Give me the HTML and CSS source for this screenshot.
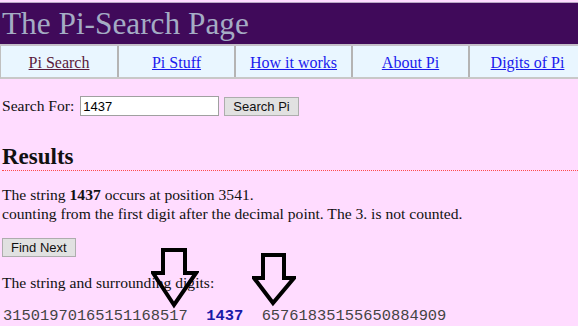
FILE: index.html
```html
<!DOCTYPE html>
<html lang="en">
<head>
    <meta charset="UTF-8">
    <title>The Pi-Search Page</title>
    <link rel="stylesheet" href="styles.css">
</head>
<body>
    <div class="masthead">The Pi-Search Page</div>
    <div class="nav">
        <a class="nav-item visited" href="#">Pi Search</a>
        <a class="nav-item" href="#">Pi Stuff</a>
        <a class="nav-item" href="#">How it works</a>
        <a class="nav-item" href="#">About Pi</a>
        <a class="nav-item" href="#">Digits of Pi</a>
    </div>

    <form class="search" onsubmit="return false">
        <label for="q">Search For:</label>
        <input id="q" type="text" value="1437">
        <button type="submit">Search Pi</button>
    </form>

    <h2 class="results-title">Results</h2>

    <p class="result">
        The string <b>1437</b> occurs at position 3541.<br>
        counting from the first digit after the decimal point. The 3. is not counted.
    </p>

    <button class="find-next" type="button">Find Next</button>

    <p class="surround-label">The string and surrounding digits:</p>
    <div class="digits">31501970165151168517&nbsp;&nbsp;<b>1437</b>&nbsp;&nbsp;65761835155650884909</div>

    <!-- markers drawn over the page -->
    <svg class="arrow arrow-one" width="48" height="62" viewBox="0 0 48 62">
        <path d="M12 2 H34 V25 H45 L23 57 L2 25 H12 Z" fill="none" stroke="#000" stroke-width="4" stroke-linejoin="miter"/>
    </svg>
    <svg class="arrow arrow-two" width="44" height="54" viewBox="0 0 44 54">
        <path d="M11 2 H32 V25 H42 L21 50 L2 25 H11 Z" fill="none" stroke="#000" stroke-width="4" stroke-linejoin="miter"/>
    </svg>
</body>
</html>
```

FILE: styles.css
```css
body {
    margin: 0;
    background: #ffdcff;
    font-family: 'Liberation Serif', 'Times New Roman', serif;
    font-size: 15.6px;
    color: #111;
    position: relative;
    min-height: 326px;
}

.masthead {
    margin-top: 2px;
    border-top: 1px solid #b9a9c4;
    background: #400a5a;
    color: #a4acc4;
    font-size: 31.3px;
    line-height: 41px;
    padding-left: 2px;
}

.nav {
    display: flex;
    background: #e9f6ff;
    border-top: 2px solid #c4c0c8;
    border-bottom: 2px solid #c8c8c8;
    border-left: 1px solid #c0c0c0;
}

.nav-item {
    width: 115px;
    flex-shrink: 0;
    height: 31px;
    line-height: 33px;
    text-align: center;
    border-right: 2px solid #b4b4b4;
    color: #1a1aee;
    font-size: 16px;
}

.nav-item:first-child {
    width: 116px;
}

.nav-item.visited {
    color: #5a1a3c;
}

.nav-item:last-child {
    border-right: none;
}

.search {
    margin: 17px 0 0 2px;
    display: flex;
    align-items: center;
}

.search input {
    margin: 0 0 0 6px;
    width: 133px;
    height: 16px;
    padding: 1px 2px;
    border: 1px solid #a0a0a0;
    font-family: 'Liberation Sans', Arial, sans-serif;
    font-size: 13px;
}

.search button, .find-next {
    background: #e1e1e1;
    border: 1px solid #adadad;
    font-family: 'Liberation Sans', Arial, sans-serif;
    font-size: 13px;
    padding: 0 8px;
    height: 19px;
    color: #111;
}

.search button {
    margin-left: 5px;
}

.results-title {
    margin: 28px 0 0 2px;
    font-size: 23px;
    line-height: 26px;
    padding-bottom: 0;
    border-bottom: 1px dotted #ff4a4a;
}

.result {
    margin: 14px 0 0 2px;
    line-height: 19px;
}

.find-next {
    margin: 15px 0 0 2px;
    display: block;
}

.surround-label {
    margin: 17px 0 0 2px;
}

.digits {
    margin: 15px 0 0 3px;
    font-family: 'Liberation Mono', 'Courier New', monospace;
    font-size: 15.4px;
    line-height: 18px;
    color: #444;
}

.digits b {
    color: #1a1aa8;
}

.arrow {
    position: absolute;
}

.arrow-one {
    left: 151px;
    top: 248px;
}

.arrow-two {
    left: 252px;
    top: 253px;
}
```
